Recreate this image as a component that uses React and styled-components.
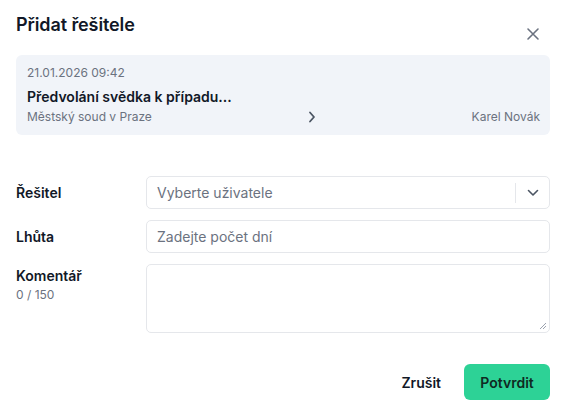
import React from "react";
import styled, { createGlobalStyle } from "styled-components";

const Global = createGlobalStyle`
  html, body { margin: 0; padding: 0; background: #fff; }
  body { font-family: Inter, "Noto Sans", sans-serif; color: #111827; }
  * { box-sizing: border-box; }
`;

const Dialog = styled.div`
  width: 565px;
  height: 414px;
  padding: 14px 15px 0 16px;
  display: flex;
  flex-direction: column;
`;

const Header = styled.div`
  display: flex;
  justify-content: space-between;
  align-items: flex-start;
  height: 41px;
`;

const Title = styled.h2`
  margin: 0;
  font-size: 18px;
  font-weight: 600;
  line-height: 22px;
  color: #111827;
  letter-spacing: -0.1px;
`;

const CloseBtn = styled.button`
  border: 0;
  background: none;
  padding: 0;
  margin: 13px 10px 0 0;
  width: 14px;
  height: 14px;
  display: flex;
  color: #6b7280;
`;

const Card = styled.div`
  background: #f1f4f9;
  border-radius: 6px;
  padding: 11px 10px 10px 11px;
  display: flex;
  flex-direction: column;
  height: 80px;
`;

const Meta = styled.div`
  font-size: 12px;
  line-height: 14px;
  color: #6b7280;
`;

const CardTitle = styled.div`
  font-size: 14px;
  font-weight: 600;
  line-height: 17px;
  margin-top: 8px;
  color: #111827;
`;

const CardRow = styled.div`
  display: flex;
  justify-content: space-between;
  align-items: center;
  margin-top: 5px;
  font-size: 12px;
  line-height: 14px;
  color: #6b7280;
`;

const Form = styled.div`
  margin-top: 41px;
  display: flex;
  flex-direction: column;
  gap: 11px;
`;

const Row = styled.div`
  display: grid;
  grid-template-columns: 130px 1fr;
  align-items: ${(p) => (p.$top ? "start" : "center")};
`;

const Label = styled.div`
  font-size: 14px;
  font-weight: 600;
  color: #111827;
  line-height: 17px;
  padding-top: ${(p) => (p.$top ? "3px" : "0")};
`;

const Counter = styled.div`
  font-size: 12px;
  font-weight: 400;
  color: #6b7280;
  margin-top: 2px;
`;

const Field = styled.div`
  height: ${(p) => p.$h || 33}px;
  border: 1px solid #e5e7eb;
  border-radius: 5px;
  display: flex;
  align-items: center;
  padding-left: 10px;
  font-size: 14px;
  color: #6b7280;
  position: relative;
  background: #fff;
`;

const Placeholder = styled.span`
  flex: 1;
`;

const Divider = styled.span`
  width: 1px;
  height: 20px;
  background: #e5e7eb;
`;

const Chevron = styled.span`
  width: 33px;
  display: flex;
  justify-content: center;
  color: #4b5563;
`;

const Grip = styled.svg`
  position: absolute;
  right: 2px;
  bottom: 2px;
`;

const Footer = styled.div`
  margin-top: 31px;
  display: flex;
  justify-content: flex-end;
  align-items: center;
  gap: 23px;
`;

const GhostButton = styled.button`
  border: 0;
  background: none;
  font-family: inherit;
  font-size: 14px;
  font-weight: 600;
  color: #111827;
  padding: 0;
`;

const PrimaryButton = styled.button`
  border: 0;
  background: #2dd296;
  border-radius: 6px;
  height: 36px;
  width: 86px;
  font-family: inherit;
  font-size: 14px;
  font-weight: 600;
  color: #0f2a22;
`;

export default function App() {
  return (
    <>
      <Global />
      <Dialog>
        <Header>
          <Title>Přidat řešitele</Title>
          <CloseBtn aria-label="Zavřít">
            <svg width="14" height="14" viewBox="0 0 14 14" fill="none" stroke="currentColor" strokeWidth="1.6" strokeLinecap="round">
              <path d="M2 2l10 10M12 2L2 12" />
            </svg>
          </CloseBtn>
        </Header>
        <Card>
          <Meta>21.01.2026 09:42</Meta>
          <CardTitle>Předvolání svědka k případu...</CardTitle>
          <CardRow>
            <span>Městský soud v Praze</span>
            <svg width="8" height="12" viewBox="0 0 8 12" fill="none" stroke="#4b5563" strokeWidth="1.8" strokeLinecap="round" strokeLinejoin="round">
              <path d="M2 1.5l4 4.5-4 4.5" />
            </svg>
            <span>Karel Novák</span>
          </CardRow>
        </Card>
        <Form>
          <Row>
            <Label>Řešitel</Label>
            <Field>
              <Placeholder>Vyberte uživatele</Placeholder>
              <Divider />
              <Chevron>
                <svg width="12" height="8" viewBox="0 0 12 8" fill="none" stroke="currentColor" strokeWidth="1.6" strokeLinecap="round" strokeLinejoin="round">
                  <path d="M1.5 1.5L6 6l4.5-4.5" />
                </svg>
              </Chevron>
            </Field>
          </Row>
          <Row>
            <Label>Lhůta</Label>
            <Field>
              <Placeholder>Zadejte počet dní</Placeholder>
            </Field>
          </Row>
          <Row $top>
            <Label $top>
              Komentář
              <Counter>0 / 150</Counter>
            </Label>
            <Field $h={69}>
              <Grip width="8" height="8" viewBox="0 0 8 8" stroke="#9ca3af" strokeWidth="1">
                <path d="M7 1L1 7M7 4L4 7" />
              </Grip>
            </Field>
          </Row>
        </Form>
        <Footer>
          <GhostButton>Zrušit</GhostButton>
          <PrimaryButton>Potvrdit</PrimaryButton>
        </Footer>
      </Dialog>
    </>
  );
}
